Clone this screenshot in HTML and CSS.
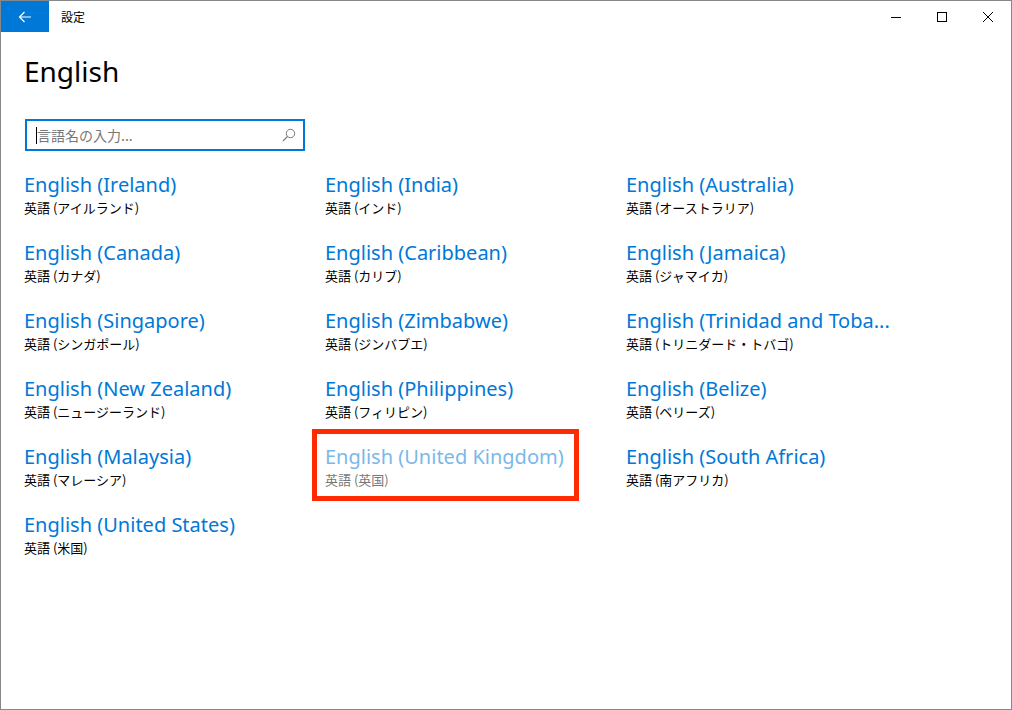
FILE: index.html
```html
<!DOCTYPE html>
<html lang="ja">
<head>
  <meta charset="UTF-8">
  <title>設定</title>
  <link rel="stylesheet" href="styles.css">
</head>
<body>

<div class="window">
  <div class="titlebar">
    <div class="back">
      <svg width="16" height="16" viewBox="0 0 16 16"><path d="M14 8H2.5M7.5 3L2.5 8l5 5" fill="none" stroke="#fff" stroke-width="1.2"/></svg>
    </div>
    <div class="apptitle">設定</div>
    <div class="controls">
      <div class="ctl"><svg width="10" height="10" viewBox="0 0 10 10"><path d="M0 5.5h10" stroke="#000" stroke-width="1"/></svg></div>
      <div class="ctl"><svg width="10" height="10" viewBox="0 0 10 10"><rect x="0.5" y="0.5" width="9" height="9" fill="none" stroke="#000" stroke-width="1"/></svg></div>
      <div class="ctl"><svg width="10" height="10" viewBox="0 0 10 10"><path d="M0 0l10 10M10 0L0 10" stroke="#000" stroke-width="1"/></svg></div>
    </div>
  </div>

  <div class="content">
    <h1>English</h1>

    <div class="search">
      <span class="caret"></span>
      <span class="placeholder">言語名の入力...</span>
      <svg class="searchicon" width="14" height="14" viewBox="0 0 14 14"><circle cx="8.5" cy="5.5" r="4.2" fill="none" stroke="#777" stroke-width="1"/><path d="M5.5 8.5L1 13" stroke="#777" stroke-width="1.1"/></svg>
    </div>

    <div class="langs">
      <div class="lang"><div class="name">English (Ireland)</div><div class="sub">英語 (アイルランド)</div></div>
      <div class="lang"><div class="name">English (India)</div><div class="sub">英語 (インド)</div></div>
      <div class="lang"><div class="name">English (Australia)</div><div class="sub">英語 (オーストラリア)</div></div>

      <div class="lang"><div class="name">English (Canada)</div><div class="sub">英語 (カナダ)</div></div>
      <div class="lang"><div class="name">English (Caribbean)</div><div class="sub">英語 (カリブ)</div></div>
      <div class="lang"><div class="name">English (Jamaica)</div><div class="sub">英語 (ジャマイカ)</div></div>

      <div class="lang"><div class="name">English (Singapore)</div><div class="sub">英語 (シンガポール)</div></div>
      <div class="lang"><div class="name">English (Zimbabwe)</div><div class="sub">英語 (ジンバブエ)</div></div>
      <div class="lang"><div class="name">English (Trinidad and Toba...</div><div class="sub">英語 (トリニダード・トバゴ)</div></div>

      <div class="lang"><div class="name">English (New Zealand)</div><div class="sub">英語 (ニュージーランド)</div></div>
      <div class="lang"><div class="name">English (Philippines)</div><div class="sub">英語 (フィリピン)</div></div>
      <div class="lang"><div class="name">English (Belize)</div><div class="sub">英語 (ベリーズ)</div></div>

      <div class="lang"><div class="name">English (Malaysia)</div><div class="sub">英語 (マレーシア)</div></div>
      <div class="lang current"><div class="name">English (United Kingdom)</div><div class="sub">英語 (英国)</div></div>
      <div class="lang"><div class="name">English (South Africa)</div><div class="sub">英語 (南アフリカ)</div></div>

      <div class="lang"><div class="name">English (United States)</div><div class="sub">英語 (米国)</div></div>
    </div>
  </div>
</div>

</body>
</html>
```

FILE: styles.css
```css
body {
  margin: 0;
  font-family: "Noto Sans", "Noto Sans CJK JP", sans-serif;
  background-color: #fff;
}

.window {
  width: 1012px;
  height: 710px;
  box-sizing: border-box;
  border: 1px solid #888;
  background-color: #fff;
}

.titlebar {
  display: flex;
  align-items: center;
  height: 31px;
}

.back {
  width: 48px;
  height: 31px;
  background-color: #0078d7;
  display: flex;
  align-items: center;
  justify-content: center;
}

.apptitle {
  margin-left: 12px;
  font-family: "Noto Sans CJK JP", sans-serif;
  font-size: 12px;
  color: #000;
}

.controls {
  margin-left: auto;
  display: flex;
}

.ctl {
  width: 46px;
  height: 31px;
  display: flex;
  align-items: center;
  justify-content: center;
}

.content {
  padding-left: 23px;
}

h1 {
  font-weight: normal;
  font-size: 28px;
  line-height: 36px;
  margin: 21px 0 0 0;
  color: #000;
}

.search {
  position: relative;
  width: 280px;
  height: 32px;
  box-sizing: border-box;
  border: 2px solid #0078d7;
  margin: 30px 0 0 1px;
  display: flex;
  align-items: center;
  padding-left: 9px;
}

.caret {
  width: 1px;
  height: 17px;
  background-color: #000;
}

.placeholder {
  font-family: "Noto Sans CJK JP", sans-serif;
  font-size: 14px;
  color: #777;
}

.searchicon {
  margin-left: auto;
  margin-right: 7px;
}

.langs {
  display: grid;
  grid-template-columns: 301px 301px 301px;
  grid-auto-rows: 68px;
  margin-top: 20px;
}

.lang {
  position: relative;
}

.name {
  font-size: 20px;
  line-height: 28px;
  color: #0078d7;
  white-space: nowrap;
}

.sub {
  font-family: "Noto Sans CJK JP", sans-serif;
  font-size: 13px;
  line-height: 18px;
  color: #000;
}

.current .name {
  color: #7ab8ea;
}

.current .sub {
  color: #777;
}

.current::after {
  content: "";
  position: absolute;
  left: -13px;
  top: -14px;
  width: 257px;
  height: 62px;
  border: 5px solid #ff2a00;
}
```
